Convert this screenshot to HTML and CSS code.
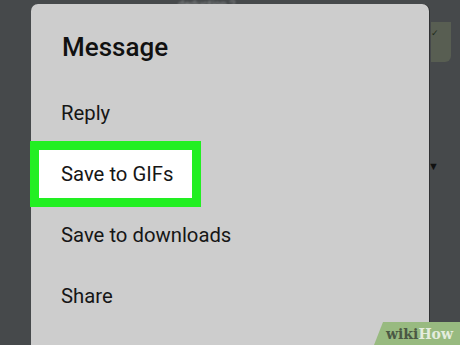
FILE: index.html
```html
<!DOCTYPE html>
<html lang="en">
<head>
  <meta charset="UTF-8">
  <meta name="viewport" content="width=device-width, initial-scale=1">
  <title>Message</title>
  <link rel="stylesheet" href="styles.css">
</head>
<body>
  <div class="screen">
    <!-- chat behind the dialog -->
    <div class="chat">
      <div class="chat-top">deduction 2</div>
      <div class="bubble"><span class="tick">&#10003;</span></div>
      <div class="arrow">&#9660;</div>
    </div>

    <div class="dialog">
      <h1 class="dialog-title">Message</h1>
      <ul class="menu">
        <li class="menu-item">Reply</li>
        <li class="menu-item picked">Save to GIFs</li>
        <li class="menu-item">Save to downloads</li>
        <li class="menu-item">Share</li>
      </ul>
    </div>

    <div class="mark"><span class="mark-wiki">wiki</span><span class="mark-how">How</span></div>
  </div>
</body>
</html>
```

FILE: styles.css
```css
body { margin: 0; background: #46494b; font-family: Roboto, "Noto Sans", sans-serif; }
.screen { position: relative; width: 460px; height: 345px; overflow: hidden; background: #46494b; }

.chat { height: 100%; }
.chat-top { padding-left: 178px; height: 8px; font-size: 11px; line-height: 12px; margin-top: -1px; color: #8c8f90; filter: blur(0.8px); }
.bubble { margin: 15px 0 0 431px; width: 20px; height: 40px; background: #585e52; border-radius: 0 0 6px 0; position: relative; }
.tick { position: absolute; left: 0; top: 6px; font-size: 9px; color: #1e2a1c; }
.arrow { margin: 98px 0 0 428px; font-size: 11px; color: #111; }

.dialog { position: absolute; left: 31px; top: 4px; width: 398px; height: 380px; background: #cdcdcd; border-radius: 7px; box-shadow: 1px 0 0 #2f3133; }
.dialog-title { margin: 27px 0 0; padding-left: 31px; font-size: 26px; font-weight: 500; line-height: 32px; color: #111; }

.menu { list-style: none; margin: 20px 0 0; padding: 0; }
.menu-item { padding-left: 30px; font-size: 20.3px; line-height: 61px; color: #161616; }
.menu-item.picked { width: fit-content; margin: -3px 0 -2px -1px; padding: 0 19px 0 22px; line-height: 48px; background: #fff; border: 9px solid #22ef22; }

.mark { position: absolute; right: 0; bottom: 0; width: 74px; height: 23px; padding-left: 12px; background: #98ba80; clip-path: polygon(9px 0, 100% 0, 100% 100%, 0 100%); font-family: "DejaVu Serif", serif; font-weight: bold; font-size: 14px; line-height: 24px; white-space: nowrap; }
.mark-wiki { color: #4b5844; }
.mark-how { color: #e4ecde; }
```
